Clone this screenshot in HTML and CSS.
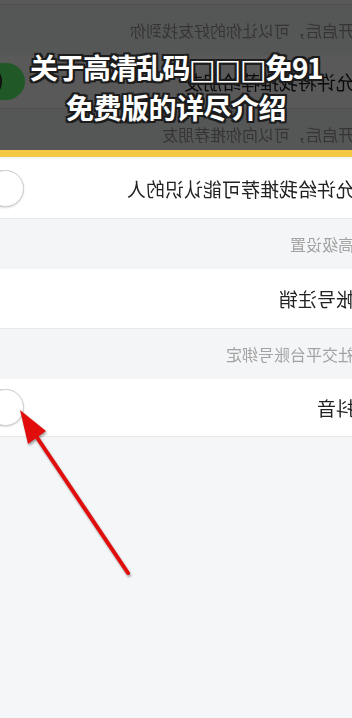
FILE: index.html
```html
<!DOCTYPE html>
<html lang="zh-CN">
  <head>
    <meta charset="UTF-8" />
    <meta name="viewport" content="width=device-width, initial-scale=1.0" />
    <title>隐私设置</title>
    <link rel="stylesheet" href="styles.css">
  </head>
  <body>
    <!-- settings screen, shown mirrored like the source capture -->
    <div class="screen">
      <div class="stub"></div>
      <div class="note">开启后，可以让你的好友找到你</div>
      <div class="row row-short">
        <span class="label">允许将我推荐给朋友</span>
        <span class="switch on"><span class="knob"></span></span>
      </div>
      <div class="note">开启后，可以向你推荐朋友</div>
      <div class="row">
        <span class="label">允许给我推荐可能认识的人</span>
        <span class="switch"><span class="knob"></span></span>
      </div>
      <div class="group">高级设置</div>
      <div class="row">
        <span class="label">帐号注销</span>
      </div>
      <div class="group">社交平台账号绑定</div>
      <div class="row row-last">
        <span class="label">抖音</span>
        <span class="switch"><span class="knob"></span></span>
      </div>
    </div>

    <svg class="arrow" width="352" height="718" viewBox="0 0 352 718">
      <line x1="34" y1="433" x2="128" y2="573" stroke="#e10d0d" stroke-width="4" stroke-linecap="round" />
      <polygon points="20,410 46,431 28,444" fill="#e10d0d" />
    </svg>

    <div class="shade">
      <h1 class="title"><span class="title-top">关于高清乱码<span class="tofu">□□□</span>免91</span><br>免费版的详尽介绍</h1>
    </div>
  </body>
</html>
```

FILE: styles.css
```css
* {
  margin: 0;
  padding: 0;
  box-sizing: border-box;
}

body {
  font-family: "Noto Sans CJK SC", "Noto Sans", sans-serif;
  background: #f5f6f8;
  width: 352px;
  height: 718px;
  overflow: hidden;
  position: relative;
}

.screen {
  width: 352px;
  transform: scaleX(-1);
}

.stub {
  height: 5px;
  background: #ffffff;
  border-bottom: 1px solid #e6e6e6;
}

.note {
  height: 50px;
  display: flex;
  align-items: center;
  background: #f4f5f7;
  color: #999999;
  font-size: 16px;
  text-indent: -2px;
  white-space: nowrap;
}

.group {
  height: 50px;
  display: flex;
  align-items: center;
  background: #f4f5f7;
  color: #a3a3a3;
  font-size: 16px;
  text-indent: -2px;
  white-space: nowrap;
}

.row {
  height: 60px;
  display: flex;
  align-items: center;
  justify-content: space-between;
  background: #ffffff;
  border-bottom: 1px solid #e8e8e8;
  color: #222222;
  font-size: 19px;
  white-space: nowrap;
}

.row-short {
  height: 54px;
}

.row-last {
  height: 58px;
}

.label {
  margin-left: -3px;
}

.switch {
  flex-shrink: 0;
  width: 60px;
  height: 37px;
  margin-right: -36px;
  border-radius: 19px;
  border: 1px solid #e2e2e2;
  background: #ffffff;
  display: flex;
  align-items: center;
}

.knob {
  width: 37px;
  height: 37px;
  margin: -1px;
  border-radius: 50%;
  background: #ffffff;
  border: 1px solid #cfcfcf;
  box-shadow: 0 1px 2px rgba(0, 0, 0, 0.15);
}

.switch.on {
  background: #5cff70;
  border-color: #5cff70;
  justify-content: flex-end;
  margin-right: -35px;
}

.switch.on .knob {
  background: #3a3a3a;
  border-color: #2a2a2a;
}

.arrow {
  position: absolute;
  top: 0;
  left: 0;
  filter: drop-shadow(1px 2px 1px rgba(0, 0, 0, 0.35));
}

.shade {
  position: absolute;
  top: 0;
  left: 0;
  width: 352px;
  height: 157px;
  background: rgba(0, 0, 0, 0.65);
  border-bottom: 7px solid #f5c843;
  padding-top: 47px;
}

.title {
  color: #ffffff;
  font-size: 28px;
  font-weight: 700;
  line-height: 40px;
  text-align: center;
  letter-spacing: -0.5px;
  text-shadow: 2px 0 0 #1c1c1c, -2px 0 0 #1c1c1c, 0 2px 0 #1c1c1c,
    0 -2px 0 #1c1c1c, 2px 2px 0 #1c1c1c, -2px -2px 0 #1c1c1c,
    2px -2px 0 #1c1c1c, -2px 2px 0 #1c1c1c;
}

.title-top {
  letter-spacing: -1.5px;
}

.tofu {
  font-family: "DejaVu Sans", sans-serif;
  font-weight: 400;
  font-size: 28px;
  line-height: 0;
  letter-spacing: -1px;
}
```
